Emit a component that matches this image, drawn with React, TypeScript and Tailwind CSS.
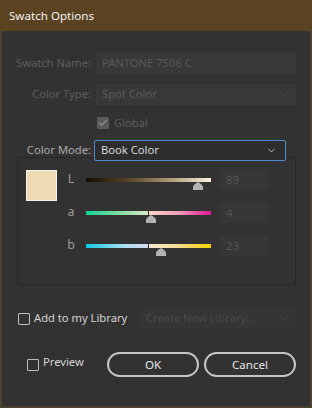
import { ChevronDown, Check } from "lucide-react";

type SliderProps = {
  label: string;
  gradient: string;
  thumb: number;
  value: string;
  center?: boolean;
};

const Thumb = () => (
  <svg width="10" height="8" viewBox="0 0 10 8">
    <path d="M0 8 V5 Q0 3.5 1.5 2.5 L4 0.6 Q5 0 6 0.6 L8.5 2.5 Q10 3.5 10 5 V8 Z" fill="#b3b3b3" />
  </svg>
);

const SliderRow = ({ label, gradient, thumb, value, center }: SliderProps) => {
  return (
    <div className="flex items-center h-[21px]">
      <span className="w-[18px] text-center text-[12.5px] text-[#9a9a9a] leading-none">{label}</span>
      <div className="relative ml-[6px] w-[125px] h-[4px]">
        <div className={`h-full w-full ${gradient}`} />
        {center && <div className="absolute left-[62px] top-[-1px] w-px h-[6px] bg-[#2a2a2a]" />}
        <div className="absolute top-[4px] -translate-x-1/2 flex" style={{ left: thumb }}>
          <Thumb />
        </div>
      </div>
      <div className="ml-[9px] w-[49px] h-[21px] bg-[#373737] text-[#545454] text-[11.5px] flex items-center px-[6px]">
        {value}
      </div>
    </div>
  );
};

const Box = ({ checked }: { checked?: boolean }) => {
  if (checked) {
    return (
      <div className="w-[12px] h-[12px] bg-[#5a5a5a] flex items-center justify-center rounded-[1px]">
        <Check size={10} strokeWidth={3} className="text-[#8e8e8e]" />
      </div>
    );
  }
  return <div className="w-[12px] h-[12px] border border-[#bdbdbd] rounded-[1px]" />;
};

export default function App() {
  return (
    <div className="w-[312px] h-[408px] bg-[#4d4231] flex flex-col font-['Segoe_UI','Noto_Sans',sans-serif] text-[11.2px]">
      {/* title */}
      <div className="h-[31px] bg-[#5b4220] flex items-center px-[9px] text-[11.6px] text-[#f2f2f2]">
        Swatch Options
      </div>

      <div className="flex-1 mx-[2px] mb-[2px] bg-[#323232] flex flex-col pt-[22px]">
        <div className="flex items-center h-[21px]">
          <span className="w-[89px] text-right text-[#5e5e5e]">Swatch Name:</span>
          <div className="ml-[5px] w-[200px] h-full bg-[#383838] text-[#575757] flex items-center px-[6px]">
            PANTONE 7506 C
          </div>
        </div>

        <div className="flex items-center h-[21px] mt-[10px]">
          <span className="w-[89px] text-right text-[#5e5e5e]">Color Type:</span>
          <div className="ml-[5px] w-[200px] h-full bg-[#383838] text-[#5b5b5b] flex items-center justify-between px-[6px]">
            Spot Color
            <ChevronDown size={11} className="text-[#555]" />
          </div>
        </div>

        <div className="flex items-center h-[16px] mt-[10px] pl-[95px] gap-[5px] text-[#5e5e5e]">
          <Box checked />
          <span>Global</span>
        </div>

        {/* color mode group */}
        <div className="mt-[9px] relative z-10 flex items-center h-[21px]">
          <span className="w-[89px] text-right text-[#a9a9a9]">Color Mode:</span>
          <div className="ml-[3px] w-[192px] h-full rounded-[2px] border border-[#4c8ad3] bg-[#2d2d2d] text-[#d8d8d8] flex items-center justify-between pl-[6px] pr-[8px]">
            Book Color
            <ChevronDown size={11} className="text-[#c8c8c8]" />
          </div>
        </div>

        <div className="-mt-[4px] ml-[15px] w-[279px] h-[128px] border border-[#272727] flex pt-[12px] pl-[8px]">
          <div className="w-[31px] h-[31px] border border-[#f4f4f4] bg-[#f0dcb4]" />
          <div className="ml-[5px] -mt-[1px] flex flex-col gap-[12px]">
            <SliderRow
              label="L"
              gradient="bg-[linear-gradient(to_right,#140d04,#5a4628_35%,#b3a17e_70%,#faf2df)]"
              thumb={112}
              value="89"
            />
            <SliderRow
              label="a"
              gradient="bg-[linear-gradient(to_right,#13d491,#8ee0a5_30%,#d8ecc4_50%,#f6d8c4_50%,#ee9ab8_75%,#e1149a)]"
              thumb={65}
              value="4"
              center
            />
            <SliderRow
              label="b"
              gradient="bg-[linear-gradient(to_right,#10c6e6,#a6e0f0_30%,#dcd9f2_50%,#f6e8d6_50%,#f4dc8a_75%,#f5d000)]"
              thumb={75}
              value="23"
              center
            />
          </div>
        </div>

        <div className="mt-[23px] flex items-center h-[21px] pl-[16px]">
          <Box />
          <span className="ml-[4px] text-[#d4d4d4]">Add to my Library</span>
          <div className="ml-auto mr-[14px] w-[156px] h-full bg-[#353535] text-[#4a4a4a] flex items-center justify-between px-[6px]">
            Create New Library...
            <ChevronDown size={11} className="text-[#4a4a4a]" />
          </div>
        </div>

        <div className="mt-[23px] flex items-center h-[25px] pl-[25px]">
          <Box />
          <span className="ml-[4px] -mt-[4px] text-[#d4d4d4]">Preview</span>
          <div className="ml-auto mr-[14px] flex gap-[5px]">
            <button className="w-[92px] h-[25px] rounded-full border-2 border-[#c6c6c6] text-[#e6e6e6] text-[11.6px]">
              OK
            </button>
            <button className="w-[92px] h-[25px] rounded-full border-2 border-[#c6c6c6] text-[#e6e6e6] text-[11.6px]">
              Cancel
            </button>
          </div>
        </div>
      </div>
    </div>
  );
}
